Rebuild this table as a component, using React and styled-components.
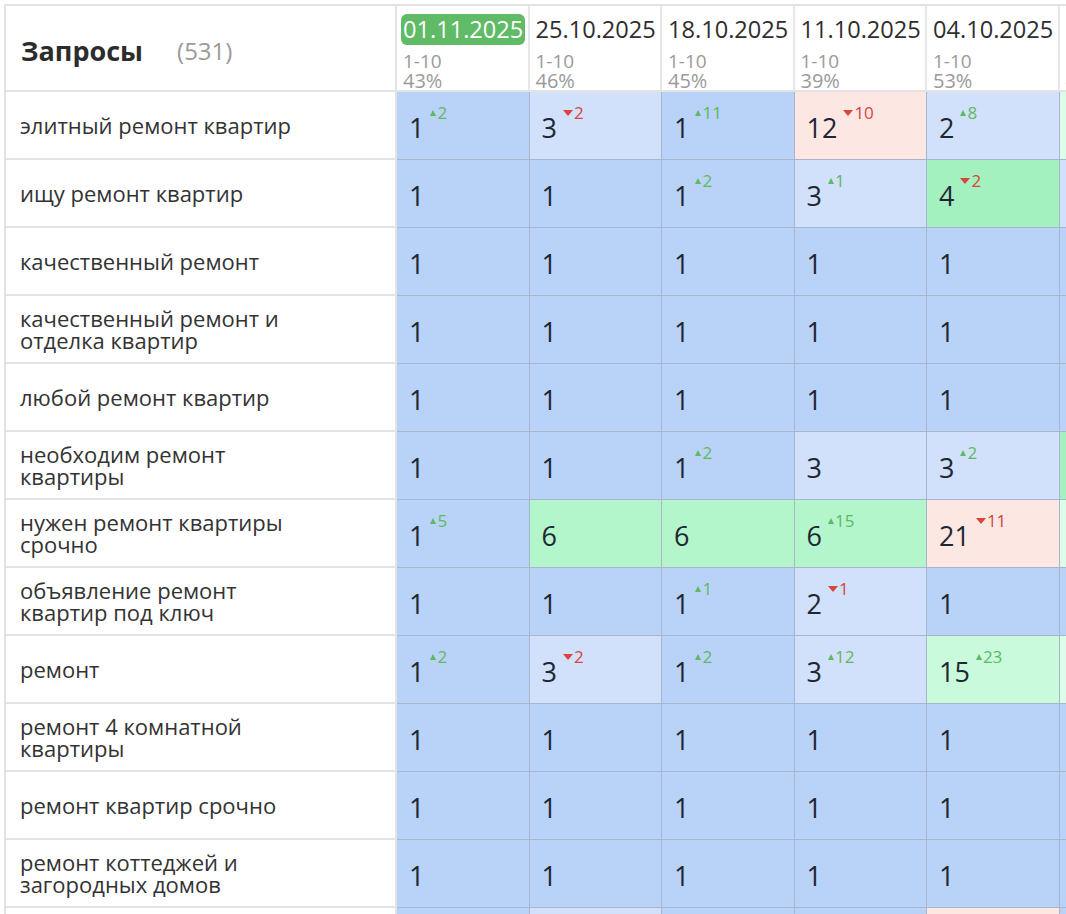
import React from 'react';
import styled, { createGlobalStyle } from 'styled-components';

const GlobalStyle = createGlobalStyle`
	html, body {
		margin: 0;
		padding: 0;
		background: #fff;
	}
	body {
		font-family: 'Open Sans', 'Noto Sans', sans-serif;
		overflow: hidden;
	}
`;

const tones = {
	b: '#b9d2f8',
	lb: '#d1e1fb',
	p: '#fde7e3',
	g: '#a4f1c0',
	gm: '#b4f6cb',
	gl: '#c8fadb',
	gx: '#dcfde9',
};

const Viewport = styled.div`
	width: 1066px;
	height: 914px;
	overflow: hidden;
	padding: 4px 0 0 4px;
	box-sizing: border-box;
`;

const Grid = styled.div`
	display: grid;
	grid-template-columns: 391px repeat(6, 132.5px);
	grid-template-rows: 86px;
	grid-auto-rows: 68px;
	width: max-content;
	border-top: 2px solid #e3e3e3;
	border-left: 2px solid #e3e3e3;
`;

const HeadLabel = styled.div`
	display: flex;
	align-items: center;
	gap: 34px;
	padding: 4px 0 0 15px;
	box-sizing: border-box;
	border-right: 2px solid #e3e3e3;
	border-bottom: 2px solid #e3e3e3;
`;

const HeadTitle = styled.span`
	font-size: 27px;
	font-weight: 700;
	color: #2c2c2c;
`;

const HeadCount = styled.span`
	font-size: 24px;
	color: #9a9a9a;
`;

const DateHead = styled.div`
	display: flex;
	flex-direction: column;
	align-items: flex-start;
	padding: 8px 0 0 4px;
	box-sizing: border-box;
	white-space: nowrap;
	border-right: 2px solid #e6e6e6;
	border-bottom: 2px solid #e3e3e3;
`;

const DateLabel = styled.span`
	font-size: 23.6px;
	line-height: 31px;
	padding: 0 2px;
	border-radius: 6px;
	color: ${(p) => (p.$active ? '#fff' : '#2e2e2e')};
	background: ${(p) => (p.$active ? '#5fbb66' : 'transparent')};
`;

const SubBlock = styled.div`
	display: flex;
	flex-direction: column;
	margin-top: 6.5px;
	padding-left: 2px;
	color: #9a9a9a;
`;

const SubLine = styled.span`
	font-size: ${(p) => (p.$big ? '20px' : '19px')};
	line-height: 1;
`;

const LabelCell = styled.div`
	display: flex;
	align-items: center;
	padding-left: 14px;
	box-sizing: border-box;
	border-right: 2px solid #e3e3e3;
	border-bottom: 2px solid #e3e3e3;
	background: #fff;
`;

const LabelText = styled.span`
	max-width: 290px;
	font-size: 22px;
	line-height: 22px;
	color: #333;
`;

const Cell = styled.div`
	display: flex;
	align-items: center;
	padding: 3px 0 0 12px;
	box-sizing: border-box;
	background: ${(p) => tones[p.$tone]};
	border-right: 1px solid #a8b5ca;
	border-bottom: 1px solid #a8b5ca;
`;

const Pos = styled.div`
	display: flex;
	align-items: flex-start;
`;

const Value = styled.span`
	font-size: 27px;
	line-height: 27px;
	color: #1f2733;
`;

const Delta = styled.span`
	display: inline-flex;
	align-items: center;
	gap: 1px;
	margin: -10px 0 0 6px;
	font-size: 17px;
	line-height: 17px;
	color: ${(p) => (p.$up ? '#5fb865' : '#d9443b')};
`;

const Arrow = styled.span`
	width: 0;
	height: 0;
	margin-top: 1px;
	border-left: ${(p) => (p.$up ? '3px' : '5px')} solid transparent;
	border-right: ${(p) => (p.$up ? '3px' : '5px')} solid transparent;
	${(p) =>
		p.$up
			? 'border-bottom: 6px solid currentColor;'
			: 'border-top: 6px solid currentColor;'}
`;

const dates = [
	{ date: '01.11.2025', range: '1-10', share: '43%', active: true },
	{ date: '25.10.2025', range: '1-10', share: '46%' },
	{ date: '18.10.2025', range: '1-10', share: '45%' },
	{ date: '11.10.2025', range: '1-10', share: '39%' },
	{ date: '04.10.2025', range: '1-10', share: '53%' },
	{ date: '27.09.2025', range: '1-10', share: '41%' },
];

const ones = () => Array.from({ length: 6 }, () => [1, 0, 'b']);

const rows = [
	['элитный ремонт квартир', [[1, 2, 'b'], [3, -2, 'lb'], [1, 11, 'b'], [12, -10, 'p'], [2, 8, 'lb'], [10, 0, 'gx']]],
	['ищу ремонт квартир', [[1, 0, 'b'], [1, 0, 'b'], [1, 2, 'b'], [3, 1, 'lb'], [4, -2, 'g'], [2, 0, 'lb']]],
	['качественный ремонт', ones()],
	['качественный ремонт и отделка квартир', ones()],
	['любой ремонт квартир', ones()],
	['необходим ремонт квартиры', [[1, 0, 'b'], [1, 0, 'b'], [1, 2, 'b'], [3, 0, 'lb'], [3, 2, 'lb'], [5, 0, 'g']]],
	['нужен ремонт квартиры срочно', [[1, 5, 'b'], [6, 0, 'gm'], [6, 0, 'gm'], [6, 15, 'gm'], [21, -11, 'p'], [10, 0, 'gx']]],
	['объявление ремонт квартир под ключ', [[1, 0, 'b'], [1, 0, 'b'], [1, 1, 'b'], [2, -1, 'lb'], [1, 0, 'b'], [1, 0, 'b']]],
	['ремонт', [[1, 2, 'b'], [3, -2, 'lb'], [1, 2, 'b'], [3, 12, 'lb'], [15, 23, 'gl'], [38, 0, 'gx']]],
	['ремонт 4 комнатной квартиры', ones()],
	['ремонт квартир срочно', ones()],
	['ремонт коттеджей и загородных домов', ones()],
	['ремонт квартир в новостройке', [[1, 0, 'b'], [2, 0, 'lb'], [1, 0, 'b'], [1, 0, 'b'], [14, 0, 'p'], [1, 0, 'b']]],
];

const App = () => {
	return (
		<>
			<GlobalStyle />
			<Viewport>
				<Grid>
					<HeadLabel>
						<HeadTitle>Запросы</HeadTitle>
						<HeadCount>(531)</HeadCount>
					</HeadLabel>
					{dates.map((d) => (
						<DateHead key={d.date}>
							<DateLabel $active={d.active}>{d.date}</DateLabel>
							<SubBlock>
								<SubLine>{d.range}</SubLine>
								<SubLine $big>{d.share}</SubLine>
							</SubBlock>
						</DateHead>
					))}
					{rows.map(([label, cells]) => (
						<React.Fragment key={label}>
							<LabelCell>
								<LabelText>{label}</LabelText>
							</LabelCell>
							{cells.map(([value, delta, tone], i) => (
								<Cell key={i} $tone={tone}>
									<Pos>
										<Value>{value}</Value>
										{delta !== 0 && (
											<Delta $up={delta > 0}>
												<Arrow $up={delta > 0} />
												{Math.abs(delta)}
											</Delta>
										)}
									</Pos>
								</Cell>
							))}
						</React.Fragment>
					))}
				</Grid>
			</Viewport>
		</>
	);
};

export default App;
